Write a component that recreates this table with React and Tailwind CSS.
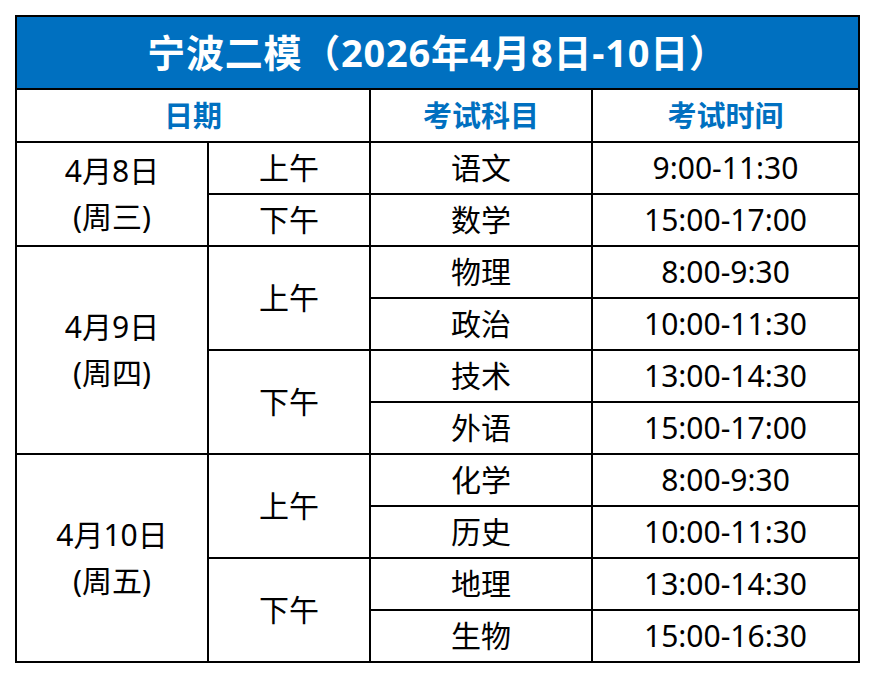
export default function App() {
  const cell = "bg-white flex items-center justify-center text-black text-[30px] leading-[46px] text-center";
  const rows = [
    ["语文", "9:00-11:30"],
    ["数学", "15:00-17:00"],
    ["物理", "8:00-9:30"],
    ["政治", "10:00-11:30"],
    ["技术", "13:00-14:30"],
    ["外语", "15:00-17:00"],
    ["化学", "8:00-9:30"],
    ["历史", "10:00-11:30"],
    ["地理", "13:00-14:30"],
    ["生物", "15:00-16:30"],
  ];
  const Sub = ({ r }) => (
    <>
      <div className={cell}>{rows[r][0]}</div>
      <div className={cell}>{rows[r][1]}</div>
    </>
  );
  return (
    <div className="w-[876px] h-[678px] bg-white pt-[15px] pl-[15px] font-['Noto_Sans','Noto_Sans_CJK_SC',sans-serif]">
      <div
        className="inline-grid bg-black p-[2px] gap-[2px] grid-cols-[190px_160px_220px_265px] grid-rows-[71px_51px_repeat(10,50px)]"
      >
        <div className="col-span-4 bg-[#0070c0] flex items-center justify-center text-white font-bold text-[38px] tracking-[0.75px]">
          宁波二模（2026年4月8日-10日）
        </div>
        <div className="col-span-2 bg-white flex items-center justify-center text-[#0070c0] font-bold text-[29px]">日期</div>
        <div className="bg-white flex items-center justify-center text-[#0070c0] font-bold text-[29px]">考试科目</div>
        <div className="bg-white flex items-center justify-center text-[#0070c0] font-bold text-[29px]">考试时间</div>

        <div className={cell + " row-span-2 flex-col"}>
          <span>4月8日</span>
          <span>(周三)</span>
        </div>
        <div className={cell}>上午</div>
        <Sub r={0} />
        <div className={cell}>下午</div>
        <Sub r={1} />

        <div className={cell + " row-span-4 flex-col"}>
          <span>4月9日</span>
          <span>(周四)</span>
        </div>
        <div className={cell + " row-span-2"}>上午</div>
        <Sub r={2} />
        <Sub r={3} />
        <div className={cell + " row-span-2"}>下午</div>
        <Sub r={4} />
        <Sub r={5} />

        <div className={cell + " row-span-4 flex-col"}>
          <span>4月10日</span>
          <span>(周五)</span>
        </div>
        <div className={cell + " row-span-2"}>上午</div>
        <Sub r={6} />
        <Sub r={7} />
        <div className={cell + " row-span-2"}>下午</div>
        <Sub r={8} />
        <Sub r={9} />
      </div>
    </div>
  );
}
